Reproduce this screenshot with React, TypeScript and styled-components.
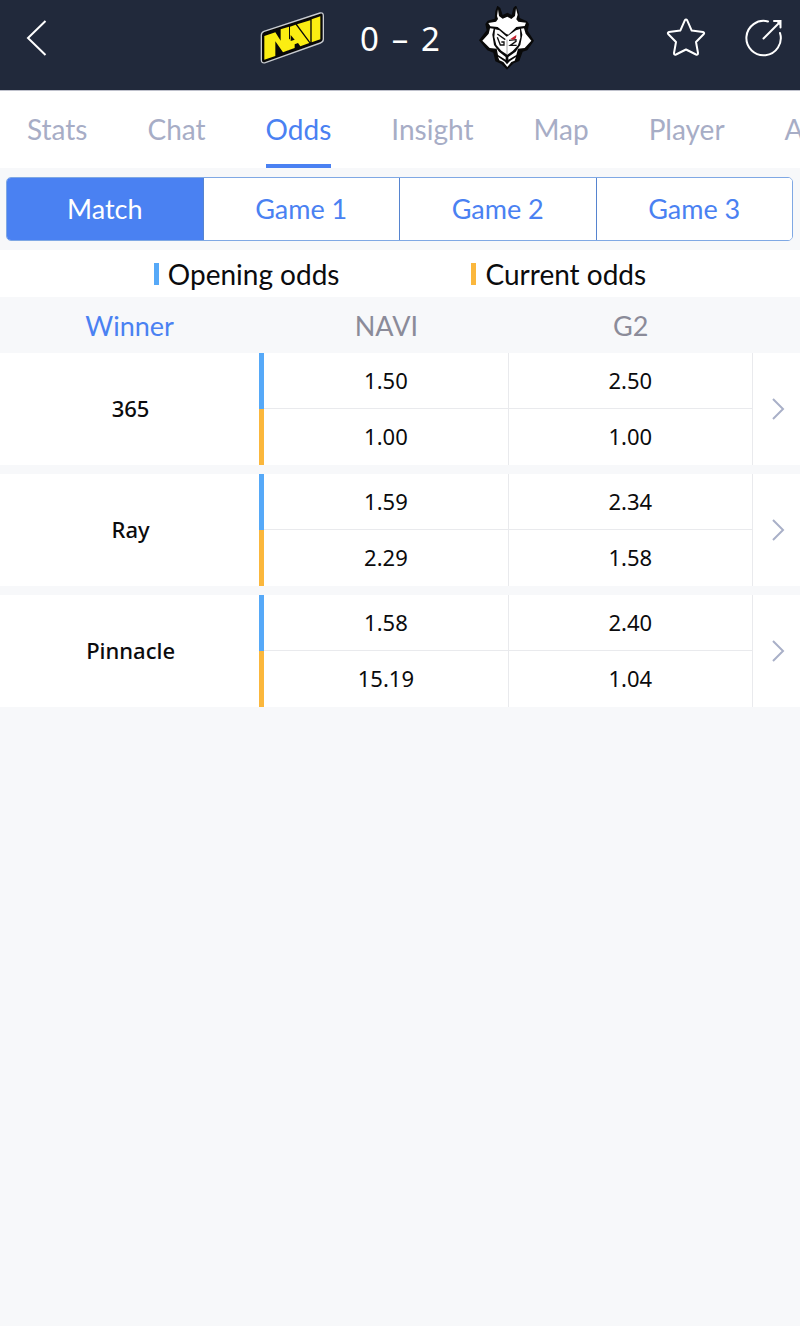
import React, { useState } from 'react';
import styled, { createGlobalStyle } from 'styled-components';

const color = {
  navy: '#21293b',
  blue: '#4a81f2',
  muted: '#a7adc6',
  grey: '#8b8b99',
  page: '#f7f8fa',
  line: '#e9eaed',
  opening: '#56a9f8',
  current: '#fbb73c',
};

const GlobalStyle = createGlobalStyle`
  *, *::before, *::after { box-sizing: border-box; }
  body {
    margin: 0;
    background: ${color.page};
    color: #0b0b0d;
    font-family: Lato, 'Noto Sans', sans-serif;
    font-size: 27px;
    line-height: 32px;
  }
  button { font: inherit; color: inherit; background: none; border: 0; padding: 0; cursor: pointer; }
`;

const Header = styled.header`
  display: grid;
  grid-template-columns: 1fr auto 1fr;
  align-items: center;
  height: 91px;
  padding: 0 16px 14px;
  background: ${color.navy};
  border-bottom: 1px solid #bfc1cc;
  color: #fff;
`;

const IconButton = styled.button`
  display: grid;
  place-items: center;
  width: 40px;
  height: 40px;
`;

const Actions = styled.div`
  display: flex;
  justify-content: flex-end;
  gap: 38px;
`;

const Scoreboard = styled.div`
  display: flex;
  align-items: center;
  gap: 36px;
`;

const Score = styled.div`
  display: flex;
  align-items: center;
  justify-content: space-between;
  width: 80px;
  padding-top: 2px;
  font: 400 33px/40px 'Noto Sans', sans-serif;
`;

const TabBar = styled.nav`
  display: flex;
  gap: 60px;
  height: 77px;
  padding-left: 27px;
  overflow: hidden;
  background: #fff;
`;

const Tab = styled.button<{ $active: boolean }>`
  flex: none;
  padding-top: 2px;
  border-bottom: 4px solid ${(p) => (p.$active ? color.blue : 'transparent')};
  color: ${(p) => (p.$active ? color.blue : color.muted)};
  font-size: 28px;
`;

const Segments = styled.div`
  display: flex;
  height: 64px;
  margin: 9px 7px 9px 6px;
  overflow: hidden;
  border: 1px solid #7fa8e4;
  border-radius: 5px;
  background: #fff;
`;

const Segment = styled.button<{ $active: boolean }>`
  flex: 1;
  color: ${(p) => (p.$active ? '#fff' : color.blue)};
  background: ${(p) => (p.$active ? color.blue : '#fff')};

  & + & { border-left: 1px solid #5684cf; }
`;

const Legend = styled.div`
  display: flex;
  justify-content: center;
  gap: 132px;
  height: 47px;
  padding-top: 8px;
  background: #fff;
  font-size: 28px;
`;

const LegendItem = styled.div<{ $tone: string }>`
  display: flex;
  gap: 9px;

  &::before {
    content: '';
    width: 5px;
    height: 22px;
    margin-top: 5px;
    background: ${(p) => p.$tone};
  }
`;

const OddsTable = styled.table`
  width: 100%;
  table-layout: fixed;
  border-collapse: separate;
  border-spacing: 0;
  text-align: center;

  th, td { padding: 0; }
  tbody + tbody::before {
    content: '';
    display: block;
    height: 9px;
  }
`;

const Column = styled.col<{ $width?: string }>`
  width: ${(p) => p.$width ?? 'auto'};
`;

const HeadCell = styled.th<{ $accent?: boolean }>`
  && { padding-top: 2px; }
  height: 56px;
  font-weight: 400;
  color: ${(p) => (p.$accent ? color.blue : color.grey)};
`;

const Bookmaker = styled.th`
  && { padding: 0 0 2px 2px; }
  background: #fff;
  font: 500 22px/32px 'Noto Sans', sans-serif;
`;

const Marker = styled.td<{ $tone: string }>`
  background: ${(p) => p.$tone};
`;

const Odd = styled.td<{ $ruled?: boolean }>`
  && { padding-bottom: 2px; }
  height: 56px;
  background: #fff;
  border-right: 1px solid ${color.line};
  border-bottom: ${(p) => (p.$ruled ? `1px solid ${color.line}` : '0')};
  font: 400 22px/32px 'Noto Sans', sans-serif;
`;

const MoreCell = styled.td`
  background: #fff;
`;

const MoreButton = styled.button`
  display: grid;
  place-items: center;
  width: 100%;
  height: 112px;
  padding-left: 3px;
`;

const NaviLogo = () => (
  <svg width="64" height="56" viewBox="30 30 192 168" role="img" aria-label="NAVI">
    <path
      d="M42 94 L210 39 Q220 37 220 47 V118 Q220 126 211 129 L46 188 Q34 191 34 180 V106 Q34 97 42 94Z"
      fill="#080808"
      stroke="#c8cbd0"
      strokeWidth="4"
    />
    <g fill="#fbed12">
      <path d="M43 108 L76 97 L92 122 V88 L117 80 V150 L99 157 L76 124 V168 L43 179Z" />
      <path d="M120 80 L137 74 L178 129 L151 139 L144 129 L134 133 V144 L115 151 L105 128 L120 116Z" />
      <path d="M141 73 L181 61 V127Z" />
      <path d="M185 58 L211 49 V118 L185 127Z" />
    </g>
    <path d="M122 105 L134 119 L122 123Z" fill="#080808" />
  </svg>
);

const G2Logo = () => (
  <svg width="64" height="64" viewBox="18 18 192 192" role="img" aria-label="G2">
    <path
      d="M82 17 L91 24 L98 45 L112 38 L125 45 L130 24 L138 16 L146 36 L149 54 L171 64 L177 72 L173 92 L192 122 L172 151 L158 155 L148 183 L131 190 L111 209 L94 192 L76 184 L70 158 L52 151 L27 121 L50 91 L46 72 L53 62 L74 56 L76 34Z"
      fill="#090909"
    />
    <path
      d="M84 28 L81 48 L84 57 L78 65 L55 69 L61 79 L83 81 L108 101 L115 104 L139 81 L164 78 L168 68 L145 65 L139 58 L143 44 L138 25 L135 48 L124 57 L112 50 L98 56 L87 48Z"
      fill="#fff"
    />
    <path d="M60 85 L71 86 L67 104 L72 135 L87 155 L107 171 V179 L84 165 L80 146 L59 144 L37 122 L56 101Z" fill="#fff" />
    <path d="M162 85 L153 86 L157 104 L151 135 L137 155 L115 171 V179 L139 165 L144 146 L164 144 L184 122 L167 101Z" fill="#fff" />
    <path d="M75 88 L88 91 L110 110 L138 91 L150 87 L151 113 L144 136 L128 153 L112 164 L94 152 L79 135 L73 111Z" fill="#fff" />
    <path d="M84 170 L105 185 L111 193 L119 184 L138 171 L134 182 L124 186 L112 201 L100 186 L88 181Z" fill="#fff" />
    <g fill="none" stroke="#111" strokeWidth="4">
      <path d="M82 102 L106 119 M82 112 L91 135 H102 V126 H94" />
      <path d="M117 121 L138 119 V124 L121 136 H140" />
      <path d="M111 119 V163" stroke="#777" strokeWidth="2" />
    </g>
    <path d="M121 117 L139 105 L138 115 L130 119Z" fill="#c5202c" />
  </svg>
);

const BackIcon = () => (
  <svg width="40" height="40" viewBox="0 0 40 40" fill="none" stroke="#fff" strokeWidth="2" aria-hidden="true">
    <path d="M29.500 3 L12 20 L29.500 37" />
  </svg>
);

const StarIcon = () => (
  <svg width="40" height="40" viewBox="0 0 40 40" fill="none" stroke="#fff" strokeWidth="2" strokeLinejoin="round" aria-hidden="true">
    <path d="M18.800 2.300 Q20 .6 21.200 2.300 L25.700 12.600 L37 14 Q39 14.700 37.600 16.300 L30 24 L32 35 Q32 37.300 30 36.500 L20 31.500 L10 36.500 Q8 37.300 8 35 L10 24 L2.400 16.300 Q1 14.700 3 14 L14.300 12.600Z" />
  </svg>
);

const ShareIcon = () => (
  <svg width="40" height="40" viewBox="0 0 40 40" fill="none" stroke="#fff" strokeWidth="2" strokeLinecap="round" aria-hidden="true">
    <path d="M24 3.500 A17.200 17.200 0 1 0 36 15" />
    <path d="M19.500 20.500 L36 4" />
    <path d="M30 3 H36.500 V9.500" />
    <path d="M32 3 H36.500 V8 Z" fill="#fff" stroke="none" />
  </svg>
);

const ChevronIcon = () => (
  <svg width="14" height="24" viewBox="0 0 14 24" fill="none" stroke="#a9b0c8" strokeWidth="2" aria-hidden="true">
    <path d="M2 2 L12 12 L2 22" />
  </svg>
);

const tabs = ['Stats', 'Chat', 'Odds', 'Insight', 'Map', 'Player', 'A'];
const games = ['Match', 'Game 1', 'Game 2', 'Game 3'];
const odds = [
  { name: '365', opening: ['1.50', '2.50'], current: ['1.00', '1.00'] },
  { name: 'Ray', opening: ['1.59', '2.34'], current: ['2.29', '1.58'] },
  { name: 'Pinnacle', opening: ['1.58', '2.40'], current: ['15.19', '1.04'] },
];

export default function App() {
  const [tab, setTab] = useState('Odds');
  const [game, setGame] = useState('Match');

  return (
    <>
      <GlobalStyle />
      <Header>
        <IconButton aria-label="Back"><BackIcon /></IconButton>
        <Scoreboard>
          <NaviLogo />
          <Score>
            <span>0</span>
            <span>–</span>
            <span>2</span>
          </Score>
          <G2Logo />
        </Scoreboard>
        <Actions>
          <IconButton aria-label="Favourite"><StarIcon /></IconButton>
          <IconButton aria-label="Share"><ShareIcon /></IconButton>
        </Actions>
      </Header>
      <TabBar>
        {tabs.map((name) => (
          <Tab key={name} $active={name === tab} onClick={() => setTab(name)}>{name}</Tab>
        ))}
      </TabBar>
      <main>
        <Segments>
          {games.map((name) => (
            <Segment key={name} $active={name === game} aria-pressed={name === game} onClick={() => setGame(name)}>
              {name}
            </Segment>
          ))}
        </Segments>
        <Legend>
          <LegendItem $tone={color.opening}>Opening odds</LegendItem>
          <LegendItem $tone={color.current}>Current odds</LegendItem>
        </Legend>
        <OddsTable>
          <colgroup>
            <Column $width="32.4%" />
            <Column $width="5px" />
            <Column />
            <Column />
            <Column $width="47px" />
          </colgroup>
          <thead>
            <tr>
              <HeadCell scope="col" $accent>Winner</HeadCell>
              <td />
              <HeadCell scope="col">NAVI</HeadCell>
              <HeadCell scope="col">G2</HeadCell>
              <td />
            </tr>
          </thead>
          {odds.map((row) => (
            <tbody key={row.name}>
              <tr>
                <Bookmaker scope="rowgroup" rowSpan={2}>{row.name}</Bookmaker>
                <Marker $tone={color.opening} />
                {row.opening.map((value, i) => <Odd key={i} $ruled>{value}</Odd>)}
                <MoreCell rowSpan={2}>
                  <MoreButton aria-label={`${row.name} details`}><ChevronIcon /></MoreButton>
                </MoreCell>
              </tr>
              <tr>
                <Marker $tone={color.current} />
                {row.current.map((value, i) => <Odd key={i}>{value}</Odd>)}
              </tr>
            </tbody>
          ))}
        </OddsTable>
      </main>
    </>
  );
}
